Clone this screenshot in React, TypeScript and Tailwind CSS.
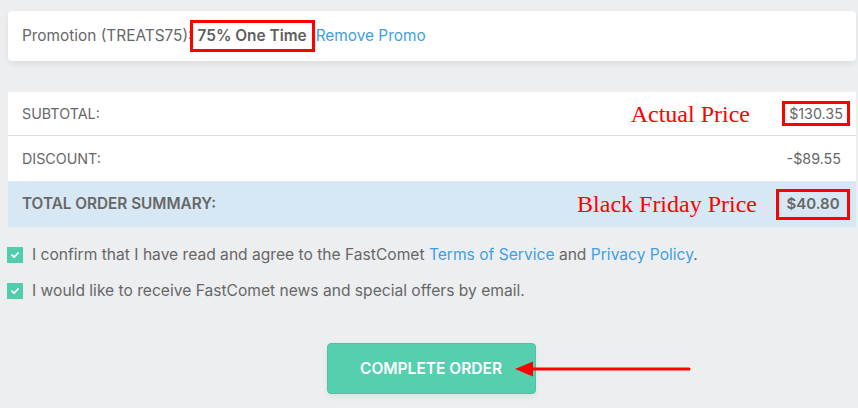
import React from 'react';

const font = { fontFamily: 'Inter, "Noto Sans", sans-serif' };
const serif = { fontFamily: '"Liberation Serif", serif' };

const Check: React.FC = () => (
  <span className="w-4 h-4 shrink-0 bg-[#52cdab] flex items-center justify-center">
    <svg width="10" height="10" viewBox="0 0 10 10">
      <path d="M2 5.2 L4.1 7.2 L8 3" fill="none" stroke="#fff" strokeWidth="1.8" strokeLinecap="round" strokeLinejoin="round" />
    </svg>
  </span>
);

const App: React.FC = () => {
  return (
    <div className="w-[858px] h-[408px] bg-[#edeef0] pl-2 pr-[2px] pt-[11px] text-[#676767] overflow-hidden" style={font}>
      <div className="h-[50px] bg-white rounded shadow-[0_3px_6px_rgba(0,0,0,0.07)] flex items-center px-[14px] text-[15.4px]">
        <span>Promotion (TREATS75):</span>
        <span className="inline-flex items-center h-[32px] border-[3px] border-[#f00] px-[5px] -ml-[3px] font-semibold text-[#5f5f5f]">75% One Time</span>
        <span className="text-[#3ea0e4] ml-[1px]">Remove Promo</span>
      </div>

      <div className="mt-[31px] text-[14.3px]">
        <div className="h-[44px] bg-white border-b border-[#dedede] flex items-center justify-between pl-[14px] pr-[6px]">
          <span>SUBTOTAL:</span>
          <div className="flex items-center">
            <span className="text-[#f00] text-[24px] mr-[32px]" style={serif}>Actual Price</span>
            <span className="h-[25px] w-[68px] border-[3px] border-[#f00] flex items-center justify-center">$130.35</span>
          </div>
        </div>
        <div className="h-[45px] bg-white flex items-center justify-between pl-[14px] pr-[15px]">
          <span>DISCOUNT:</span>
          <span>-$89.55</span>
        </div>
        <div className="h-[46px] bg-[#d8e7f4] flex items-center justify-between pl-[14px] pr-[6px] font-semibold">
          <span className="text-[15.3px]">TOTAL ORDER SUMMARY:</span>
          <div className="flex items-center">
            <span className="text-[#f00] text-[24px] font-normal mr-[19px]" style={serif}>Black Friday Price</span>
            <span className="h-[31px] w-[74px] border-[3px] border-[#f00] flex items-center justify-center text-[15px]">$40.80</span>
          </div>
        </div>
      </div>

      <div className="mt-[20px] flex flex-col gap-[20px] text-[15.6px] -ml-[1px]">
        <div className="flex items-center gap-[9px] h-4">
          <Check />
          <span>
            I confirm that I have read and agree to the FastComet <span className="text-[#3ea0e4]">Terms of Service</span> and <span className="text-[#3ea0e4]">Privacy Policy</span>.
          </span>
        </div>
        <div className="flex items-center gap-[9px] h-4">
          <Check />
          <span>I would like to receive FastComet news and special offers by email.</span>
        </div>
      </div>

      <div className="mt-[44px] flex justify-center pr-[2px]">
        <div className="relative">
          <button className="w-[209px] h-[51px] rounded bg-[#55cfad] border border-[#4cc3a2] text-white font-semibold text-[15.5px] shadow-[0_3px_6px_rgba(0,0,0,0.06)]">
            COMPLETE ORDER
          </button>
          <svg className="absolute left-[186px] top-[17px]" width="180" height="18" viewBox="0 0 180 18">
            <path d="M2 9 L20 1.5 L20 16.5 Z" fill="#f00" />
            <line x1="18" y1="9" x2="176" y2="9" stroke="#f00" strokeWidth="3" strokeLinecap="round" />
          </svg>
        </div>
      </div>
    </div>
  );
};

export default App;
